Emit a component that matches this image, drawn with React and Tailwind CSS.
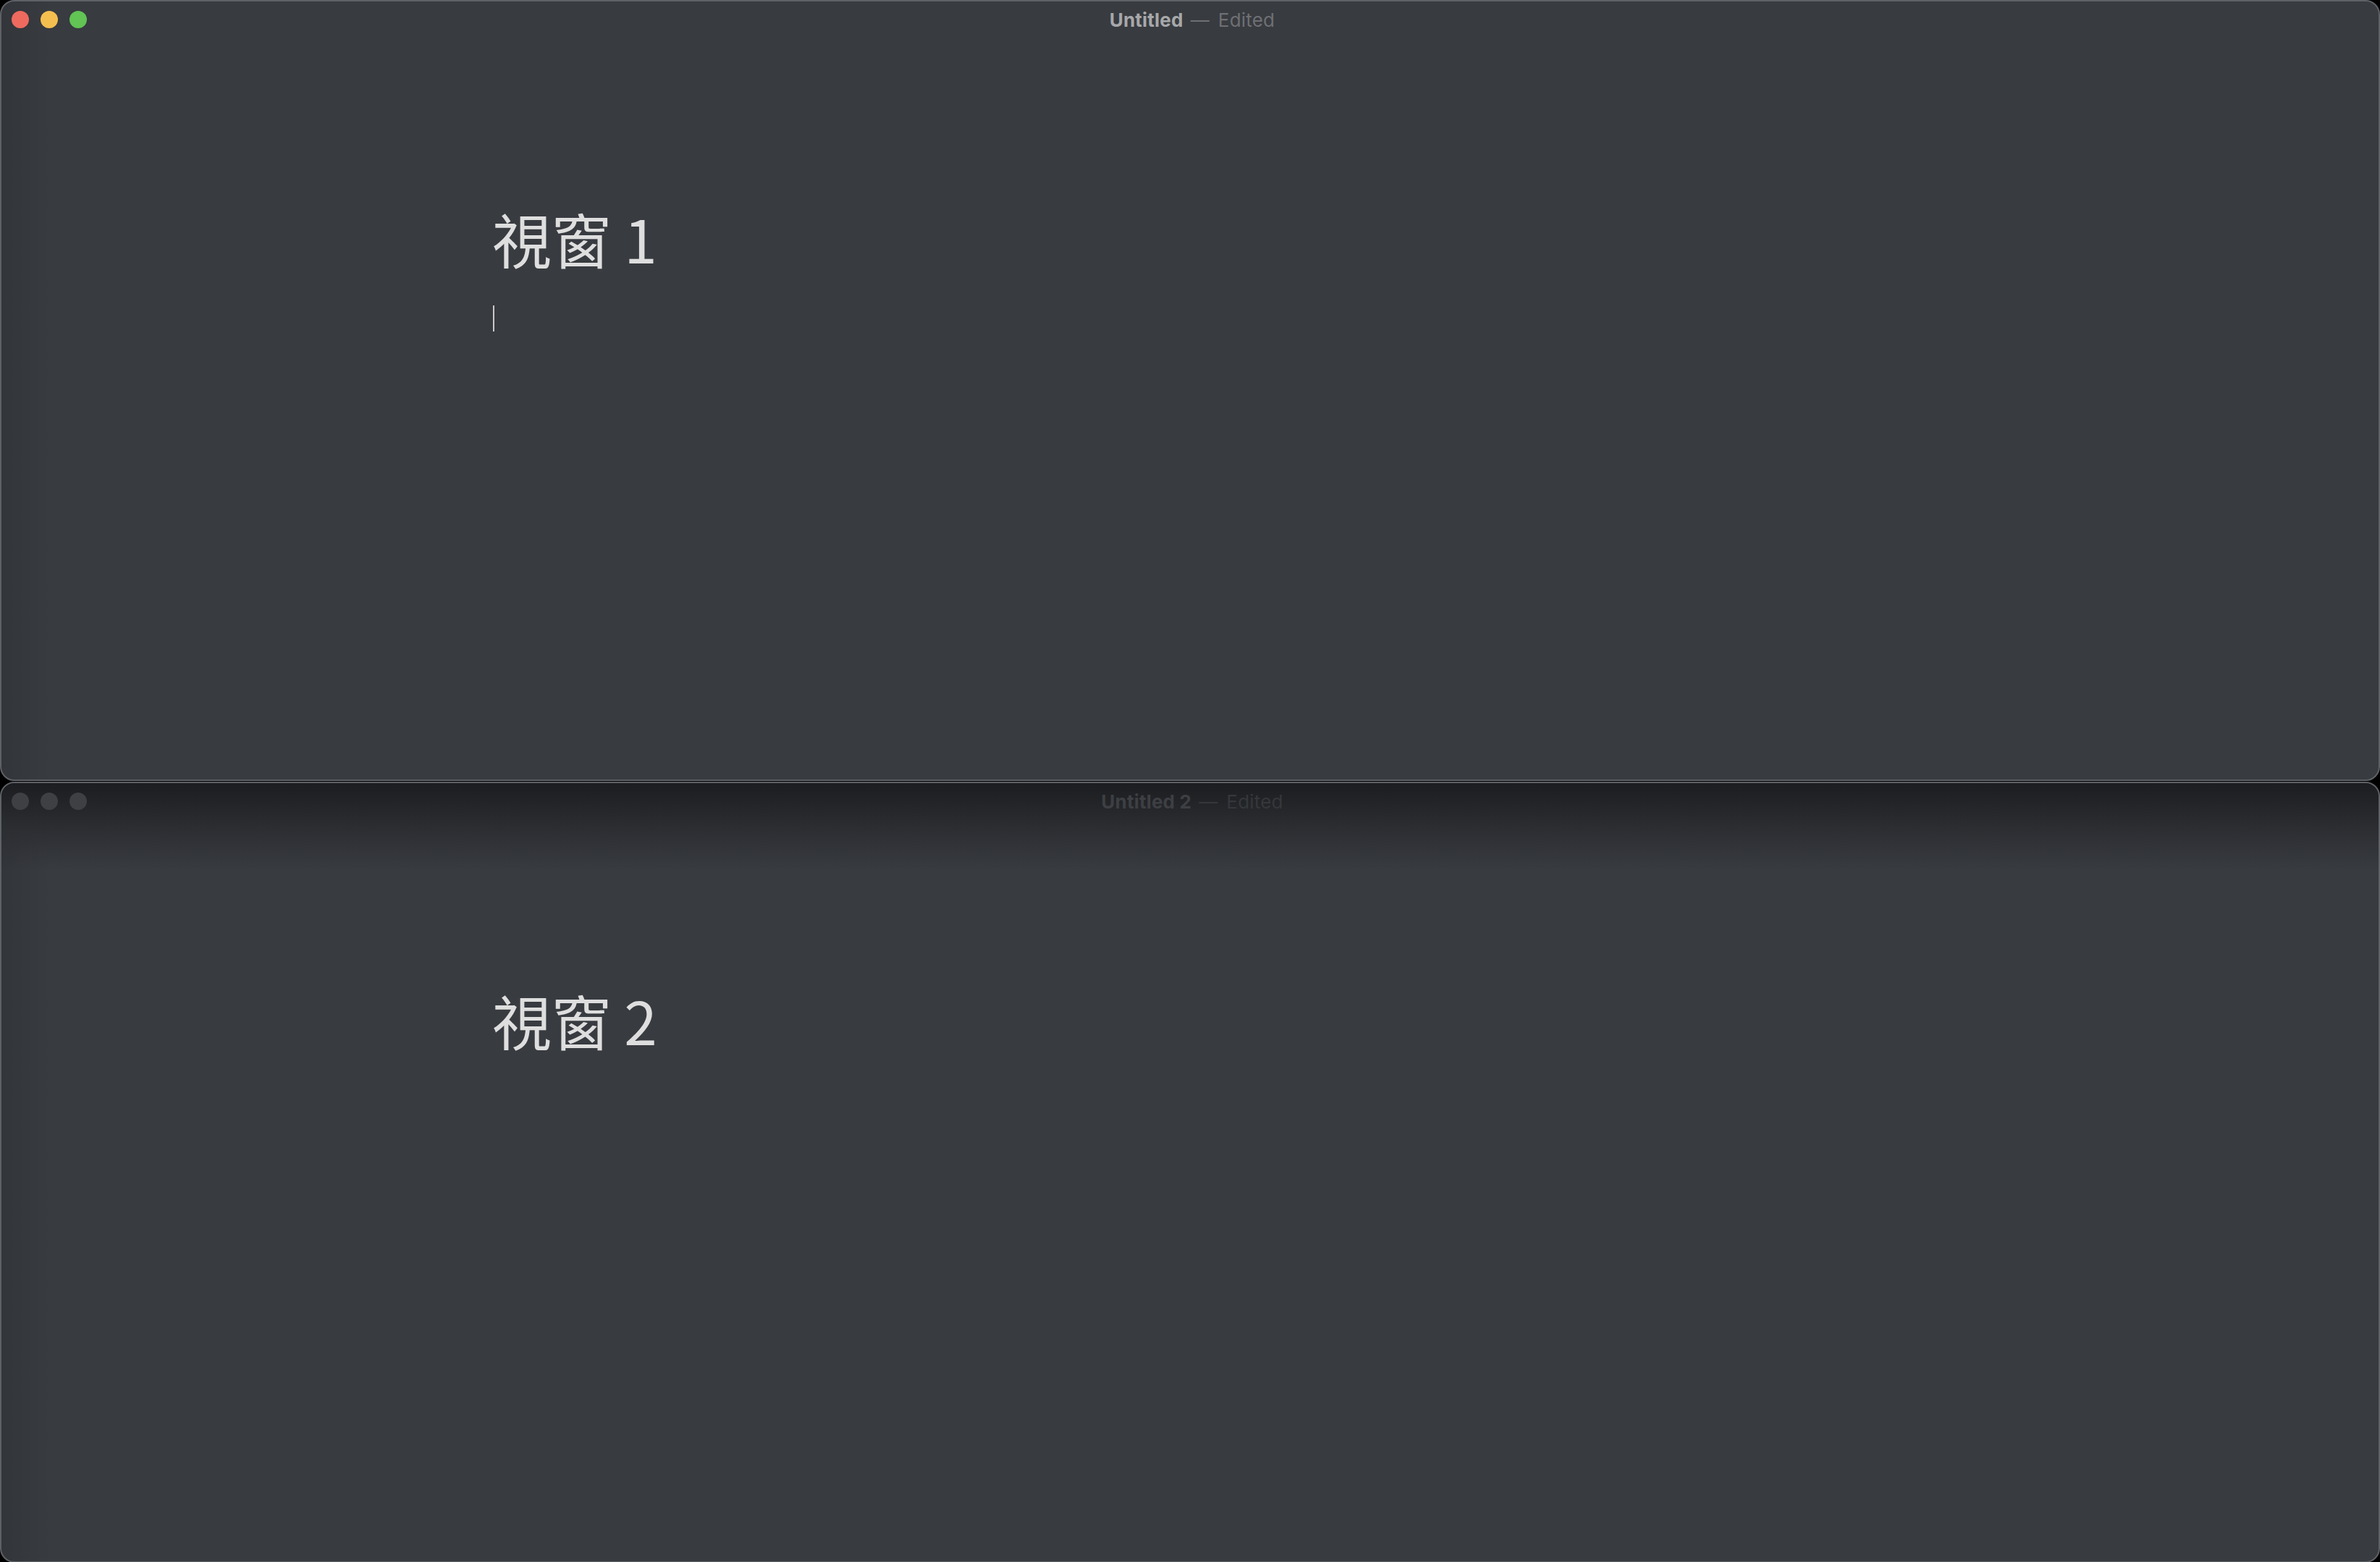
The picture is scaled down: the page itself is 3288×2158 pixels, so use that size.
const Lights = ({ active }) => (
  <div className="flex items-center gap-4 pl-[14px]">
    <span className={`w-6 h-6 rounded-full ${active ? 'bg-[#ee6a5f]' : 'bg-[#3e4043]'}`} />
    <span className={`w-6 h-6 rounded-full ${active ? 'bg-[#f5bf4f]' : 'bg-[#3e4043]'}`} />
    <span className={`w-6 h-6 rounded-full ${active ? 'bg-[#61c454]' : 'bg-[#3e4043]'}`} />
  </div>
);

const Window = ({ title, heading, active, cursor, className }) => (
  <div className={`relative flex-none h-[1079px] rounded-[20px] border-2 border-[#5e6166] bg-[#383b40] overflow-hidden ${className}`}>
    {/* soft left edge shading */}
    <div className="absolute inset-y-0 left-0 w-[70px] bg-gradient-to-r from-black/10 to-transparent pointer-events-none" />
    {!active && (
      <div className="absolute inset-x-0 top-0 h-[120px] bg-gradient-to-b from-[#1c1d20] via-[#2b2d31] to-transparent pointer-events-none" />
    )}
    <div className="relative h-[50px] flex items-center">
      <Lights active={active} />
      <div
        className="absolute inset-0 flex items-center justify-center text-[26px] tracking-[0.2px] pl-[6px]"
        style={{ fontFamily: 'Inter, "Liberation Sans", sans-serif' }}
      >
        <span className={`font-bold ${active ? 'text-[#a7a8aa]' : 'text-[#3d3f43]'}`}>{title}</span>
        <span className={`ml-[10px] ${active ? 'text-[#6e7074]' : 'text-[#35373b]'}`}>—</span>
        <span className={`ml-[12px] ${active ? 'text-[#6e7074]' : 'text-[#35373b]'}`}>Edited</span>
      </div>
    </div>
    <div className="relative pl-[678px] pt-[236px]" style={{ fontFamily: '"Noto Sans CJK TC", "Noto Sans", sans-serif' }}>
      <h1 className="text-[82px] leading-none font-normal text-[#dedede]">{heading}</h1>
      {cursor && <div className="mt-[52px] ml-[1px] w-[2px] h-[36px] bg-[#c9c9c9]" />}
    </div>
  </div>
);

export default function App() {
  return (
    <div className="w-[3288px] h-[2158px] bg-black flex flex-col overflow-hidden">
      <Window title="Untitled" heading="視窗 1" active cursor />
      <Window title="Untitled 2" heading="視窗 2" className="mt-[1px]" />
    </div>
  );
}
